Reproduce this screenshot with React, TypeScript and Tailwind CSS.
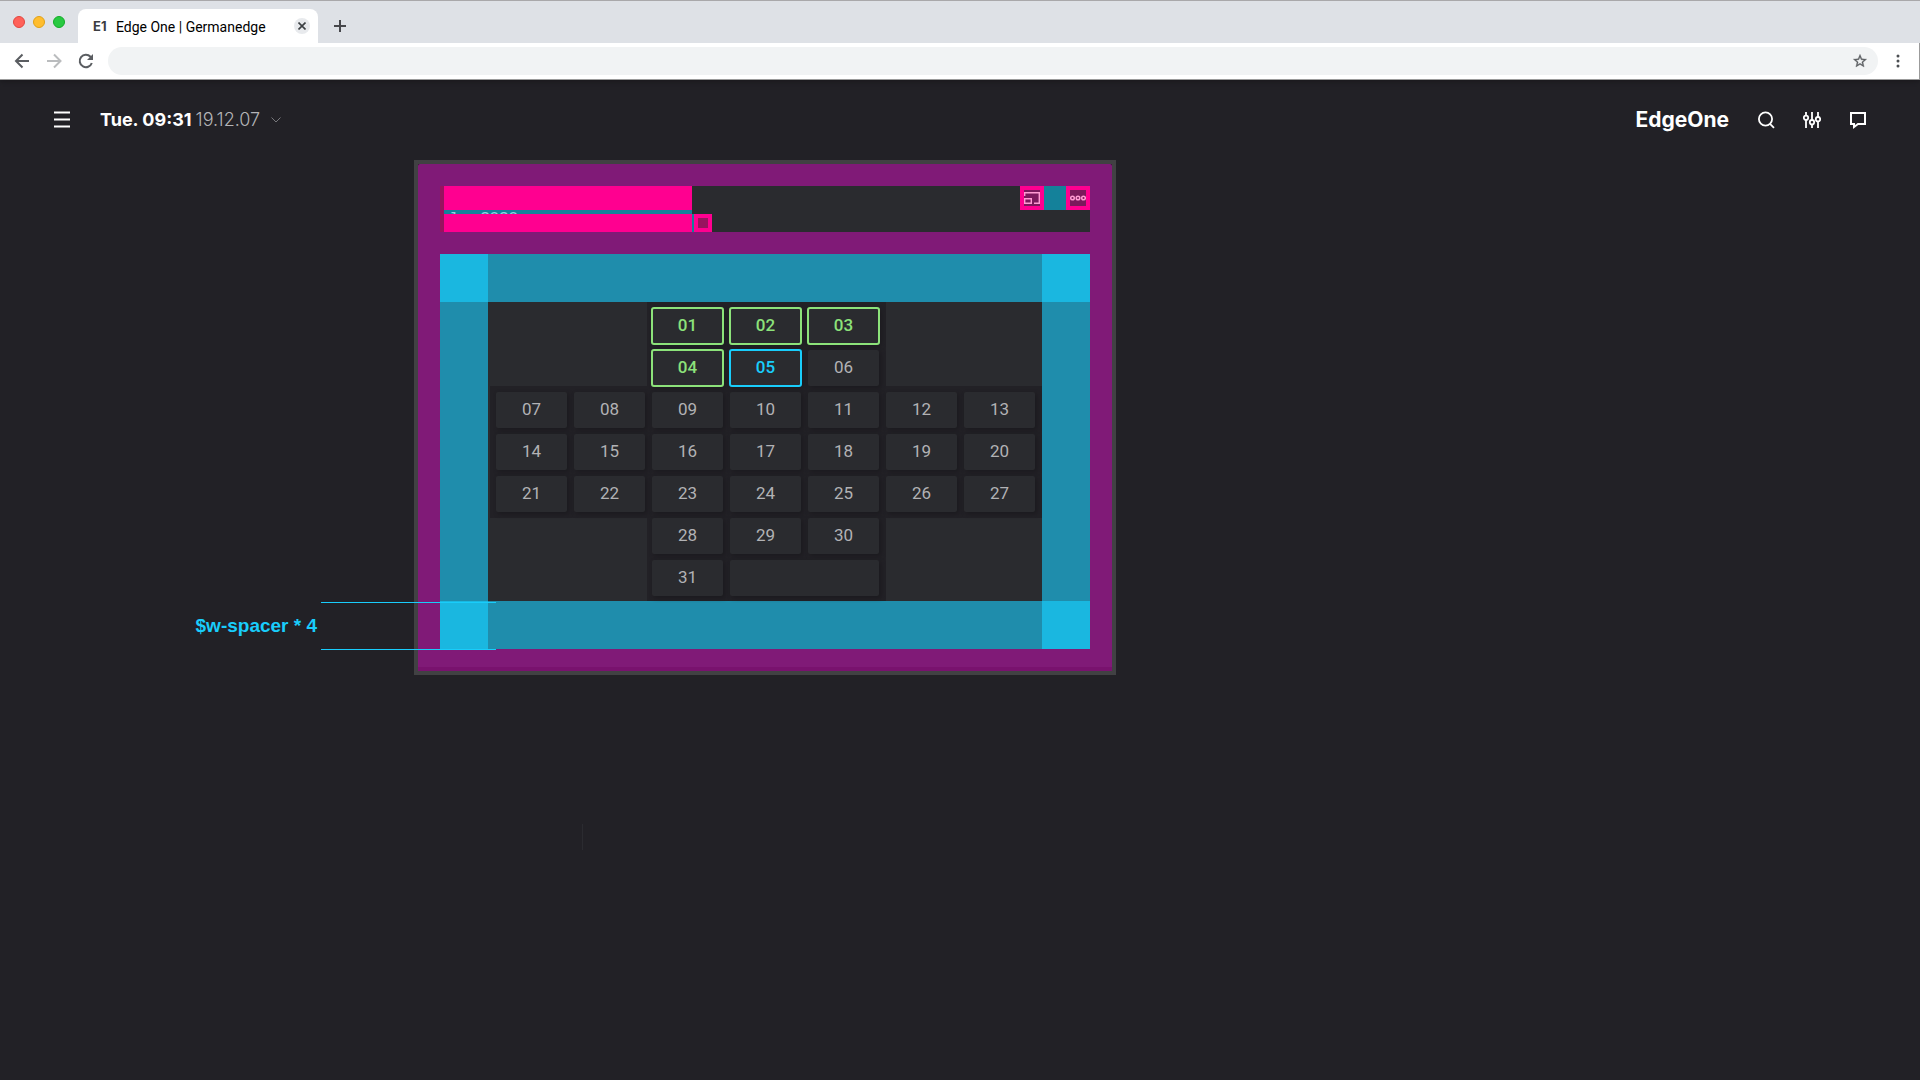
import clsx from "clsx";

type DayStatus = "done" | "today" | "open";

const firstDays = ["01", "02", "03", "04", "05", "06"];
const middleDays = [
  "07", "08", "09", "10", "11", "12", "13",
  "14", "15", "16", "17", "18", "19", "20",
  "21", "22", "23", "24", "25", "26", "27",
];
const lastDays = ["28", "29", "30", "31"];

const getStatus = (day: string): DayStatus => {
  if (Number(day) < 5) return "done";
  if (day === "05") return "today";
  return "open";
};

function Day({ day }: { day: string }) {
  const status = getStatus(day);
  return (
    <button
      type="button"
      className={clsx(
        "h-9 rounded-xs bg-[#2a2b2f] pb-[2px] text-[17px] leading-[34px] shadow-[2px_2px_4px_#1b1a1f]",
        status === "open" && "text-[#b2b2b5]",
        status === "done" && "font-medium text-[#8ce27a] outline-2 -outline-offset-1 outline-[#8ce27a]",
        status === "today" && "font-medium text-[#19cdfb] outline-2 -outline-offset-1 outline-[#19cdfb]"
      )}
    >
      {day}
    </button>
  );
}

function BrowserBar() {
  return (
    <header className="relative z-10 border-b border-[#9b9b9b] bg-white font-[Roboto,sans-serif] shadow-[0_1px_6px_#17161a]">
      <div className="flex h-[43px] items-end border-t border-[#a9a8aa] bg-[#dee1e6]">
        <div className="flex gap-2 self-center pb-px pl-[13px]">
          <span className="size-3 rounded-full border border-[#e2463f] bg-[#ff6159]" />
          <span className="size-3 rounded-full border border-[#e1a116] bg-[#ffbd2e]" />
          <span className="size-3 rounded-full border border-[#12ac28] bg-[#28c941]" />
        </div>
        <div className="ml-[13px] flex h-[34px] w-60 items-center rounded-t-lg bg-white pr-2 pl-[15px]">
          <span className="w-[23px] pt-px font-[Inter,sans-serif] text-[13px] font-bold text-[#3c3d41]">E1</span>
          <span className="flex-1 pt-[2px] text-sm text-black">Edge One | Germanedge</span>
          <button type="button" aria-label="Close tab" className="flex size-4 items-center justify-center rounded-full bg-[#e8eaed]">
            <svg className="size-2 stroke-[#3c4043]" viewBox="0 0 8 8" fill="none" strokeWidth="1.6">
              <path d="M.5 .5l7 7M7.5 .5l-7 7" />
            </svg>
          </button>
        </div>
        <button type="button" aria-label="New tab" className="mb-[11px] ml-4">
          <svg className="size-3 stroke-[#46474b]" viewBox="0 0 12 12" fill="none" strokeWidth="2">
            <path d="M6 0v12M0 6h12" />
          </svg>
        </button>
      </div>
      <div className="flex h-9 items-center border-r border-[#9b9b9b] pl-[14px]">
        <button type="button" aria-label="Back" className="mr-4">
          <svg className="size-4 stroke-[#5a5d61]" viewBox="0 0 16 16" fill="none" strokeWidth="2">
            <path d="M15 8H2.500M8.500 1.500L2 8l6.500 6.500" />
          </svg>
        </button>
        <button type="button" aria-label="Forward" className="mr-4">
          <svg className="size-4 stroke-[#babcbe]" viewBox="0 0 16 16" fill="none" strokeWidth="2">
            <path d="M1 8h13M8 1.500L14.500 8 8 14.500" />
          </svg>
        </button>
        <button type="button" aria-label="Reload" className="mr-[14px]">
          <svg className="size-4" viewBox="0 0 16 16" fill="none">
            <path d="M13.800 10A6.200 6.200 0 1 1 12.500 3.800L14 5.300" stroke="#5a5d61" strokeWidth="2" />
            <path d="M15 1v6H9z" fill="#5a5d61" />
          </svg>
        </button>
        <div className="flex h-7 flex-1 items-center rounded-full bg-[#f1f3f4] pr-[10px] pl-4">
          <input aria-label="Address" className="min-w-0 flex-1 bg-transparent text-sm outline-none" />
          <button type="button" aria-label="Bookmark">
            <svg className="size-4" viewBox="0 0 24 24" fill="#5a5d61" stroke="#5a5d61" strokeWidth=".5">
              <path d="M22 9.240l-7.190-.62L12 2 9.190 8.630 2 9.240l5.460 4.730L5.820 21 12 17.270 18.180 21l-1.630-7.030L22 9.240zM12 15.400l-3.760 2.270 1-4.280-3.320-2.880 4.380-.38L12 6.100l1.710 4.040 4.380.38-3.320 2.880 1 4.280L12 15.400z" />
            </svg>
          </button>
        </div>
        <button type="button" aria-label="Menu" className="mr-[18px] ml-[17px]">
          <svg className="h-4 w-[6px]" viewBox="0 0 6 16" fill="#4b4e52">
            <circle cx="3" cy="3" r="1.500" />
            <circle cx="3" cy="8" r="1.500" />
            <circle cx="3" cy="13" r="1.500" />
          </svg>
        </button>
      </div>
    </header>
  );
}

function AppHeader() {
  return (
    <nav className="flex h-20 items-center pr-[53px] pl-[54px]">
      <button type="button" aria-label="Open navigation">
        <svg className="h-[18px] w-4 stroke-white" viewBox="0 0 16 18" fill="none" strokeWidth="2">
          <path d="M0 1.500h16M0 8.500h16M0 15.500h16" />
        </svg>
      </button>
      <button type="button" className="ml-[30px] flex items-center text-lg">
        <span className="font-bold text-white">Tue. 09:31</span>
        <span className="ml-1 font-light text-[#b4b4b7]">19.12.07</span>
        <svg className="ml-[11px] h-[6px] w-[10px] stroke-[#77777b]" viewBox="0 0 10 6" fill="none">
          <path d="M.5 .5L5 5 9.500 .5" />
        </svg>
      </button>
      <span className="ml-auto pb-px text-[21px] font-bold text-white">EdgeOne</span>
      <div className="ml-7 flex gap-[28px] text-white">
        <button type="button" aria-label="Search">
          <svg className="size-[18px]" viewBox="0 0 18 18" fill="none" stroke="currentColor" strokeWidth="1.800">
            <circle cx="8.500" cy="8" r="6.600" />
            <path d="M13 12.800l4 4" />
          </svg>
        </button>
        <button type="button" aria-label="Settings">
          <svg className="size-[18px]" viewBox="0 0 18 18" fill="none" stroke="currentColor" strokeWidth="1.800">
            <path d="M3 1v3.500M3 9v8M9 1v8M9 13.500V17M15 1v5M15 10.500V17" />
            <circle cx="3" cy="6.800" r="2.200" />
            <circle cx="9" cy="11.200" r="2.200" />
            <circle cx="15" cy="8.200" r="2.200" />
          </svg>
        </button>
        <button type="button" aria-label="Messages">
          <svg className="size-[18px]" viewBox="0 0 18 18" fill="none" stroke="currentColor" strokeWidth="2">
            <path d="M2 2h14v11H9l-4 3v-3H2z" />
          </svg>
        </button>
      </div>
    </nav>
  );
}

function WidgetHeader() {
  return (
    <div className="flex h-[46px] items-start bg-[#2a2b2f]">
      <div className="h-full w-1 bg-[#98135f]" />
      <div className="w-[248px]">
        <div className="h-6 bg-[#ff0090]" />
        <div className="h-1 overflow-hidden bg-[#14819a] pl-1 font-['Liberation_Sans',Arial,sans-serif] text-[17px] leading-[18px] text-[#8fd3df]">
          Jun 2020
        </div>
        <div className="h-[18px] bg-[#ff0090]" />
      </div>
      <div className="flex self-end">
        <div className="w-[2px] bg-[#14819a]" />
        <div className="size-[18px] border-4 border-[#ff0090] bg-[#98135f]" />
      </div>
      <div className="ml-auto flex h-6">
        <button type="button" aria-label="Resize widget" className="size-6 border-4 border-[#ff0090] bg-[#7b1a5c]">
          <svg className="size-4" viewBox="0 0 16 16" fill="none" stroke="#ff9bd2" strokeWidth="1.400">
            <path d="M.7 6V2.700h14.600v10.600H10" />
            <path d="M.7 8.700h6.600v4.600H.7z" />
          </svg>
        </button>
        <div className="w-[22px] bg-[#14819a]" />
        <button type="button" aria-label="More" className="size-6 border-4 border-[#ff0090] bg-[#7b1a5c]">
          <svg className="size-4" viewBox="0 0 16 16" fill="none" stroke="#ff9bd2" strokeWidth="1.500">
            <circle cx="2.500" cy="8" r="1.800" />
            <circle cx="8" cy="8" r="1.800" />
            <circle cx="13.500" cy="8" r="1.800" />
          </svg>
        </button>
      </div>
    </div>
  );
}

function Calendar() {
  return (
    <div className="flex flex-col items-end bg-[#2a2b2f] font-[Roboto,sans-serif]">
      <div className="z-10 mr-[156px] grid w-[239px] grid-cols-3 gap-x-[7px] gap-y-[6px] bg-[#222126] pt-[6px] pr-[7px] pl-[5px]">
        {firstDays.map((day) => (
          <Day key={day} day={day} />
        ))}
      </div>
      <div className="grid w-[552px] grid-cols-7 gap-x-[7px] gap-y-[6px] bg-[#222126] py-[6px] pr-[7px] pl-[6px]">
        {middleDays.map((day) => (
          <Day key={day} day={day} />
        ))}
      </div>
      <div className="mr-[156px] grid w-[239px] grid-cols-3 gap-x-[7px] gap-y-[6px] bg-[#222126] pr-[7px] pb-[5px] pl-[5px]">
        {lastDays.map((day) => (
          <Day key={day} day={day} />
        ))}
        <div className="col-span-2 rounded-xs bg-[#2a2b2f] shadow-[2px_2px_4px_#1b1a1f]" />
      </div>
    </div>
  );
}

function SpacerLabel() {
  return (
    <div className="absolute top-px right-[-8px] flex h-12 items-center">
      <span className="pr-1 font-['Liberation_Sans',Arial,sans-serif] text-[19px] font-bold whitespace-nowrap text-[#19cdfb]">
        $w-spacer * 4
      </span>
      <div className="h-full w-[175px] border-y border-[#19cdfb]" />
    </div>
  );
}

function Widget() {
  return (
    <section className="ml-[414px] w-[702px] border-4 border-[#414143] bg-[#222126]">
      <div className="rounded-t-xs border-b-4 border-[#79126e] bg-[#801a77] px-[22px] pt-[22px] pb-[18px]">
        <WidgetHeader />
        <div className="mt-[22px] grid grid-cols-[48px_1fr_48px] grid-rows-[48px_auto_48px] bg-[#1f8dac]">
          <div className="bg-[#1ab7e0]" />
          <div />
          <div className="bg-[#1ab7e0]" />
          <div />
          <Calendar />
          <div />
          <div className="relative bg-[#1ab7e0]">
            <SpacerLabel />
          </div>
          <div />
          <div className="bg-[#1ab7e0]" />
        </div>
      </div>
    </section>
  );
}

export default function App() {
  return (
    <div className="min-h-screen bg-[#222126] font-[Inter,sans-serif]">
      <BrowserBar />
      <AppHeader />
      <main>
        <Widget />
        <div className="mt-[149px] ml-[582px] h-[26px] w-px bg-[#2b2b30]" />
      </main>
    </div>
  );
}
